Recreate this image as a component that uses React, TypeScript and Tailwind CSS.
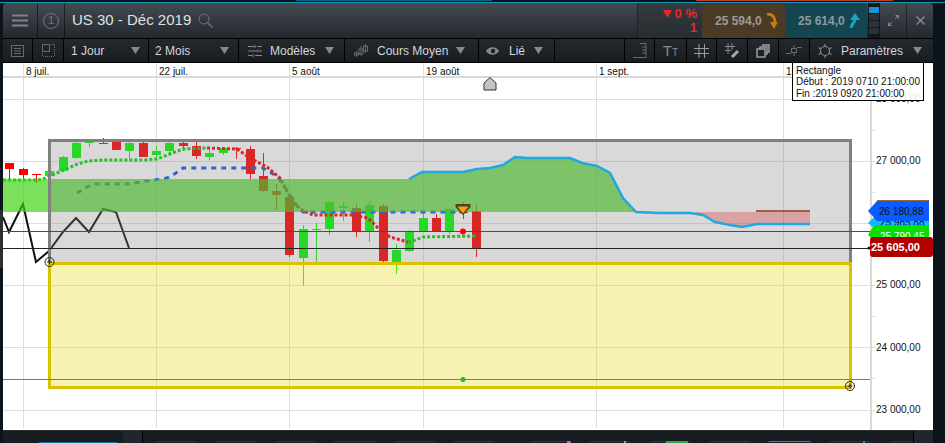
import React from "react";

type C = [number, number, number, number, number, "g" | "r"];
// x, bodyTop, bodyBottom, wickTop, wickBottom, colour
const candles: C[] = [
  [9, 163, 169, 163, 179, "r"],
  [23, 169, 175, 168, 179, "r"],
  [36, 174, 175, 174, 183, "r"],
  [49, 171, 176, 171, 177, "g"],
  [63, 157, 171, 156, 172, "g"],
  [76, 143, 158, 142, 159, "g"],
  [89, 142, 143, 141, 147, "g"],
  [103, 143, 144, 138, 144, "r"],
  [116, 142, 150, 141, 150, "r"],
  [129, 143, 151, 142, 159, "g"],
  [143, 143, 157, 142, 157, "r"],
  [156, 151, 155, 146, 159, "g"],
  [169, 143, 151, 142, 155, "g"],
  [183, 143, 146, 142, 151, "r"],
  [196, 146, 156, 142, 159, "r"],
  [209, 153, 157, 149, 160, "g"],
  [223, 148, 153, 147, 155, "g"],
  [236, 148, 149, 147, 159, "r"],
  [250, 149, 174, 146, 179, "r"],
  [263, 176, 191, 153, 192, "r"],
  [276, 191, 195, 184, 210, "r"],
  [289, 197, 255, 197, 257, "r"],
  [303, 229, 258, 225, 286, "g"],
  [316, 229, 230, 223, 262, "g"],
  [329, 202, 229, 201, 235, "g"],
  [343, 206, 208, 202, 221, "g"],
  [356, 208, 231, 204, 237, "r"],
  [369, 205, 231, 201, 242, "g"],
  [383, 206, 261, 204, 262, "r"],
  [396, 250, 262, 244, 274, "g"],
  [409, 232, 251, 230, 252, "g"],
  [423, 218, 231, 213, 231, "g"],
  [436, 218, 231, 214, 231, "r"],
  [449, 209, 231, 208, 234, "g"],
  [463, 212, 213, 202, 219, "r"],
  [476, 211, 248, 205, 257, "r"],
];

const vGrid = [23, 156, 289, 423, 596, 783];
const hGrid = [99, 161, 223, 285, 347, 410];
const ticks = [130, 192, 254, 316, 378];
const dates: [number, string][] = [
  [26, "8 juil."],
  [159, "22 juil."],
  [292, "5 août"],
  [426, "19 août"],
  [599, "1 sept."],
  [786, "15 sept."],
];
const prices: [number, string][] = [
  [98, "28 000,00"],
  [160, "27 000,00"],
  [284, "25 000,00"],
  [347, "24 000,00"],
  [409, "23 000,00"],
];

const cloudTop =
  "410,179 422,172 463,172 477,169 490,168 503,165 515,157 527,158 570,158 582,163 597,166 610,173 623,198 636,212";
const cloudLine =
  "409,179 422,172 463,172 477,169 490,168 503,165 515,157 527,158 570,158 582,163 597,166 610,173 623,198 636,212 660,213 690,213 703,215 715,222 730,225 742,227 757,224 810,224";

function Chart() {
  return (
    <svg viewBox="3 63 930 367" width="930" height="367" className="block">
      <rect x="3" y="63" width="930" height="367" fill="#ffffff" />
      {/* grid */}
      <g shapeRendering="crispEdges">
        {vGrid.map((x) => (
          <rect key={x} x={x} y="63" width="1" height="365" fill="#dedede" />
        ))}
        <rect x="3" y="76" width="867" height="2" fill="#d9d9d9" />
        {hGrid.map((y) => (
          <rect key={y} x="3" y={y} width="872" height="1" fill="#dedede" />
        ))}
        {ticks.map((y) => (
          <rect key={y} x="870" y={y} width="5" height="1" fill="#dedede" />
        ))}
        <rect x="870" y="63" width="2" height="367" fill="#d9d9d9" />
      </g>

      {/* candles */}
      {candles.map(([x, t, b, wt, wb, c], i) => {
        const col = c === "g" ? "#00ff00" : "#ff0000";
        return (
          <g key={i} shapeRendering="crispEdges">
            <rect x={x} y={wt} width="1" height={wb - wt} fill={col} />
            <rect x={x - 4} y={t} width="9" height={b - t} fill={col} />
          </g>
        );
      })}

      {/* indicators */}
      <polyline
        points="77,193 87,187 93,184 127,184 167,178 173,175 183,168 263,168 278,177 290,195 298,208 303,212 470,212"
        fill="none"
        stroke="#0b59f0"
        strokeWidth="3"
        strokeDasharray="5 5"
      />
      <polyline
        points="3,180 38,180 43,179 57,173 75,165 88,161 103,160 143,160 157,159 170,154 183,149 207,148"
        fill="none"
        stroke="#00d800"
        strokeWidth="3"
        strokeDasharray="3 2"
      />
      <polyline
        points="207,148 237,149 250,158 267,167 280,178 290,197 300,209 313,215 352,215 368,218 378,228 390,237 408,242"
        fill="none"
        stroke="#ff0000"
        strokeWidth="3"
        strokeDasharray="3 2"
      />
      <polyline
        points="408,242 413,241 423,237 477,236"
        fill="none"
        stroke="#00d800"
        strokeWidth="3"
        strokeDasharray="3 2"
      />
      <polyline
        points="3,217 9,232 23,204 36,262 49,251 63,232 76,218 89,232 103,209 116,212 129,248"
        fill="none"
        stroke="#111111"
        strokeWidth="2"
      />

      {/* clouds */}
      <polygon
        points={`3,179 410,179 ${cloudTop} 3,212`}
        fill="#3cd10f"
        fillOpacity="0.68"
      />
      <polygon
        points="693,212 810,212 810,224 757,224 742,227 730,225 715,222 703,215"
        fill="#ff0000"
        fillOpacity="0.3"
      />

      {/* rectangles */}
      <rect x="49.5" y="140.5" width="801" height="122" fill="#808080" fillOpacity="0.3" />
      <path d="M49.5 263V140.5H850.5V263" fill="none" stroke="#808080" strokeWidth="3" />
      <rect x="49.5" y="263.5" width="801" height="124" fill="#e6d000" fillOpacity="0.3" stroke="#d9c300" strokeWidth="3" />

      <polyline points={cloudLine} fill="none" stroke="#1fa9e0" strokeWidth="2.5" />
      <rect x="756" y="210" width="54" height="2" fill="#9b6240" shapeRendering="crispEdges" />

      {/* horizontal levels */}
      <g shapeRendering="crispEdges">
        <rect x="3" y="231" width="867" height="1" fill="#d81010" />
        <rect x="3" y="248" width="867" height="1" fill="#222222" />
        <rect x="3" y="379" width="867" height="1" fill="#22b822" />
      </g>

      {/* handles & markers */}
      <circle cx="49.5" cy="262" r="4.5" fill="none" stroke="#222222" />
      <path d="M49.5 259.5v5M47 262h5" stroke="#222222" />
      <circle cx="850" cy="386" r="4.5" fill="none" stroke="#222222" />
      <path d="M850 383.5v5M847.5 386h5" stroke="#222222" />
      <circle cx="463" cy="231.5" r="3" fill="#ff0000" />
      <circle cx="463" cy="379.5" r="2.5" fill="#14c814" />
      <polygon points="455.500,204 470.500,204 470.500,207 463,215 455.500,207" fill="#45451f" />
      <polygon points="457.500,206.500 468.500,206.500 463,213.500" fill="#ffa010" />
      <polygon points="484,83 490,77.5 496,83 496,90 484,90" fill="#c4c4c4" stroke="#333333" />

      {/* axis labels */}
      <g fontSize="10" fill="#111111">
        {dates.map(([x, t]) => (
          <text key={t} x={x} y="74.5">
            {t}
          </text>
        ))}
        {prices.map(([y, t]) => (
          <text key={t} x="876" y={y + 3.5}>
            {t}
          </text>
        ))}
      </g>

      {/* price tags */}
      <polygon points="868,223 874,217 929,217 929,228 874,228" fill="#12b8ff" />
      <text x="880" y="226" fontSize="10" fill="#111111">25 985,88</text>
      <polygon points="868,235 874,225 929,225 929,240 874,240" fill="#09e000" />
      <text x="880" y="240" fontSize="10" fill="#ffffff">25 790,45</text>
      <polygon points="868,211 877,201 929,201 929,221 877,221" fill="#0a5cff" />
      <rect x="877" y="200" width="52" height="1" fill="#9b6240" />
      <text x="879" y="215" fontSize="10" fill="#111111">26 180,88</text>
      <rect x="870" y="237" width="63" height="20" rx="3" fill="#b00000" />
      <circle cx="869" cy="248" r="1.5" fill="#111111" />
      <text x="871" y="251" fontSize="11" fontWeight="700" fill="#ffffff">25 605,00</text>
    </svg>
  );
}

const Caret = () => (
  <svg width="9" height="7" viewBox="0 0 9 7" className="shrink-0">
    <polygon points="0,0 9,0 4.5,7" fill="#85898d" />
  </svg>
);

function Tool({ w, children }: { w: string; children?: React.ReactNode }) {
  return (
    <div className={`flex h-full items-center justify-center border-r border-black ${w}`}>
      {children}
    </div>
  );
}

function Drop({
  w,
  icon,
  label,
  gap,
}: {
  w: string;
  icon?: React.ReactNode;
  label: string;
  gap: string;
}) {
  return (
    <div className={`flex h-full items-center border-r border-black pl-[9px] ${w}`}>
      {icon}
      <span className={`text-xs text-[#d4d6d8] ${gap}`}>{label}</span>
      <Caret />
    </div>
  );
}

const ic = { fill: "none", stroke: "#85898d", strokeWidth: 1 };
const dim = { fill: "none", stroke: "#666b6f", strokeWidth: 1 };

const Tab = ({ w, tip }: { w: string; tip?: React.ReactNode }) => (
  <div className={`relative h-[2px] shrink-0 rounded-t-[4px] border-t border-[#33383d] ${w}`}>
    {tip}
  </div>
);

export default function App() {
  return (
    <div className="relative flex h-[443px] w-[945px] flex-col overflow-hidden bg-[#0c141b] font-['Liberation_Sans',Arial,sans-serif]">
      {/* top strip */}
      <div className="flex h-[3px] shrink-0 flex-col">
        <div className="flex h-[2px]">
          <div className="w-[296px]" />
          <div className="h-px w-[196px] bg-[#12607c]" />
          <div className="w-[204px]" />
          <div className="h-px w-[197px] bg-[#c0392b]" />
        </div>
        <div className="h-px bg-[#1597b8]" />
      </div>

      <div className="ml-[3px] flex w-[930px] flex-col">
        {/* header */}
        <div className="flex h-[35px] items-stretch overflow-hidden rounded-t-[4px] bg-gradient-to-b from-[#464b51] to-[#23282e]">
          <div className="flex w-[35px] items-center justify-center border-r border-black/50">
            <svg width="16" height="13" viewBox="0 0 16 13">
              <path d="M0 1.5h16M0 6.5h16M0 11.5h16" stroke="#7f8387" strokeWidth="2" />
            </svg>
          </div>
          <div className="flex w-[27px] items-center justify-center border-r border-black/50">
            <div className="flex h-[16px] w-[16px] items-center justify-center rounded-full border border-[#72777b] text-[11px] text-[#72777b]">
              1
            </div>
          </div>
          <div className="ml-[7px] flex w-[565px] items-center">
            <span className="text-[15px] text-[#dfe1e3]">US 30 - Déc 2019</span>
            <svg width="15" height="15" viewBox="0 0 15 15" className="ml-[7px]">
              <circle cx="6" cy="6" r="5" fill="none" stroke="#6f7478" />
              <path d="M9.5 9.5L14.5 14.5" stroke="#6f7478" strokeWidth="1.3" />
            </svg>
          </div>
          <div className="flex w-[65px] flex-col items-end justify-center border-l border-black/30 bg-[#2b3036]/60 pr-[5px] text-[13px] font-bold leading-[14px] text-[#e82626]">
            <div className="flex items-center gap-[3px]">
              <svg width="9" height="8" viewBox="0 0 9 8">
                <polygon points="0,0 9,0 4.5,8" fill="#e82626" />
              </svg>
              <span>0 %</span>
            </div>
            <span>1</span>
          </div>
          <div className="flex w-[83px] items-center gap-[4px] bg-[#4b3a26] pl-[13px] text-xs font-bold text-[#9d9a94]">
            <span>25 594,0</span>
            <svg width="12" height="16" viewBox="0 0 12 16">
              <path d="M1 1C7 1 9 4 9 10" fill="none" stroke="#c47a12" strokeWidth="3" />
              <polygon points="4,9 12,9 8,16" fill="#c47a12" />
            </svg>
          </div>
          <div className="flex w-[82px] items-center gap-[4px] bg-[#15454f] pl-[13px] text-xs font-bold text-[#8b9ba0]">
            <span>25 614,0</span>
            <svg width="12" height="16" viewBox="0 0 12 16">
              <path d="M2 15C2 11 6 10 6 6" fill="none" stroke="#12a6c8" strokeWidth="3" />
              <polygon points="1,7 11,7 6,0" fill="#12a6c8" />
            </svg>
          </div>
          <div className="ml-[1px] flex w-[12px] flex-col justify-center gap-[1px] bg-[#14181c] px-px">
            <div className="h-[6px] bg-[#1b8fd8]" />
            <div className="h-[6px] bg-[#2c3238]" />
            <div className="h-[6px] bg-[#2c3238]" />
            <div className="h-[6px] bg-[#2c3238]" />
          </div>
          <div className="flex w-[27px] items-center justify-center border-r border-black/40">
            <svg width="13" height="13" viewBox="0 0 13 13">
              <path d="M8 1h4v4zM1 8v4h4z" fill="#7f8387" />
              <path d="M10 3L8 5M3 10l2-2" stroke="#7f8387" />
            </svg>
          </div>
          <div className="flex w-[26px] items-center justify-center">
            <svg width="9" height="9" viewBox="0 0 9 9">
              <path d="M.5.5l8 8M8.5.5l-8 8" stroke="#8a8e92" strokeWidth="1.3" />
            </svg>
          </div>
        </div>

        {/* toolbar */}
        <div className="flex h-[25px] items-stretch border-y border-black bg-gradient-to-b from-[#24292e] to-[#181c20]">
          <Tool w="w-[30px]">
            <svg width="13" height="12" viewBox="0 0 13 12" {...dim}>
              <rect x=".5" y=".5" width="12" height="11" />
              <path d="M3 3.5h7M3 6h7M3 8.500h7" />
            </svg>
          </Tool>
          <Tool w="w-[31px]">
            <svg width="13" height="13" viewBox="0 0 13 13" {...dim}>
              <rect x=".5" y=".5" width="7" height="7" />
              <path d="M9 .5h3.500v12H.5V9" strokeDasharray="1 1" />
            </svg>
          </Tool>
          <Drop w="w-[85px]" label="1 Jour" gap="mr-[27px] -ml-[2px]" />
          <Drop w="w-[90px]" label="2 Mois" gap="mr-[30px] -ml-[3px]" />
          <Drop
            w="w-[106px]"
            label="Modèles"
            gap="ml-[8px] mr-[10px]"
            icon={
              <svg width="14" height="12" viewBox="0 0 14 12" {...ic}>
                <path d="M0 1.500h6M9 1.500h5M0 6h9M11 6h3M0 10.500h4M7 10.500h7M7 0v3M10 4.500v3M5 9v3" />
              </svg>
            }
          />
          <Drop
            w="w-[134px]"
            label="Cours Moyen"
            gap="ml-[9px] mr-[8px]"
            icon={
              <svg width="14" height="14" viewBox="0 0 14 14" {...dim}>
                <path d="M2.500 7v6M7 2v10M11.500 0v9" />
                <rect x=".5" y="9" width="4" height="2" />
                <rect x="5" y="5" width="4" height="5" />
                <rect x="9.500" y="2" width="4" height="5" />
              </svg>
            }
          />
          <Drop
            w="w-[76px]"
            label="Lié"
            gap="ml-[10px] mr-[9px]"
            icon={
              <svg width="13" height="10" viewBox="0 0 13 10" className="-ml-[2px]">
                <path d="M0 5C3 0 10 0 13 5C10 10 3 10 0 5Z" fill="#85898d" />
                <circle cx="7" cy="5" r="2.200" fill="#1e2328" />
              </svg>
            }
          />
          <div className="w-[70px] border-r border-black" />
          <Tool w="w-[30px]">
            <svg width="14" height="15" viewBox="0 0 14 15" {...dim}>
              <path d="M7 .5h6v14H0M9 4h4M9 7h4M9 10h4" />
            </svg>
          </Tool>
          <Tool w="w-[32px]">
            <span className="text-[15px] leading-none text-[#85898d]">
              T<span className="text-[10px]">T</span>
            </span>
          </Tool>
          <Tool w="w-[30px]">
            <svg width="15" height="14" viewBox="0 0 15 14" fill="none" stroke="#9a9ea2">
              <path d="M5 0v14M10.500 0v14M0 4.500h15M0 9.500h15" />
            </svg>
          </Tool>
          <Tool w="w-[31px]">
            <svg width="15" height="15" viewBox="0 0 15 15" {...ic}>
              <path d="M3 0v11M7 0v7M0 3.500h10M0 7.500h6" />
              <path d="M7 14L13 8" stroke="#a5a9ad" strokeWidth="3" />
            </svg>
          </Tool>
          <Tool w="w-[31px]">
            <svg width="14" height="14" viewBox="0 0 14 14" fill="none" stroke="#9a9ea2" strokeWidth="1.5">
              <rect x="1" y="5" width="8" height="8" />
              <path d="M4 5V3h7v7h-2M7 3V1h6v7h-2" />
            </svg>
          </Tool>
          <Tool w="w-[31px]">
            <svg width="16" height="11" viewBox="0 0 16 11" {...dim}>
              <rect x="5.500" y="3.500" width="5" height="4" />
              <path d="M0 8.500h5M11 2.500h5M8 0v3.500M8 7.500v3.500" />
            </svg>
          </Tool>
          <div className="flex w-[123px] items-center pl-[8px]">
            <svg width="14" height="14" viewBox="0 0 14 14" fill="none" stroke="#85898d" strokeWidth="1.2">
              <circle cx="7" cy="7" r="4.500" />
              <path d="M7 0v2.500M7 11.500V14M.5 3.500l2.500 1.500M13.500 3.500L11 5M.5 10.500L3 9M13.500 10.500L11 9" />
            </svg>
            <span className="ml-[9px] mr-[10px] text-xs text-[#d4d6d8]">Paramètres</span>
            <Caret />
          </div>
        </div>

        {/* chart */}
        <div className="relative h-[367px]">
          <Chart />
          <div className="absolute left-[789px] top-0 flex h-[38px] w-[132px] flex-col justify-end border border-t-0 border-black bg-white/90 pb-px pl-[3px] text-[10px] leading-[11.500px] text-[#111111]">
            <span>Rectangle</span>
            <span>Début : 2019 0710 21:00:00</span>
            <span>Fin :2019 0920 21:00:00</span>
          </div>
        </div>
      </div>

      {/* bottom bar */}
      <div className="ml-[3px] flex h-[13px] w-[930px] border-t border-[#2b3035] bg-[#171c21]">
        <div className="flex w-[120px] items-end pl-[36px]">
          <div className="h-px w-[78px] bg-[#0f6f9a]" />
        </div>
        <div className="w-[20px] border-r border-black bg-[#20262d]" />
        <div className="flex flex-1 items-end gap-[35px] overflow-hidden pl-[12px]">
          <div className="flex gap-[18px]">
            <Tab w="w-[42px]" />
            <Tab w="w-[42px]" />
            <Tab w="w-[41px]" />
            <Tab w="w-[42px]" />
            <Tab w="w-[42px]" />
            <Tab w="w-[41px]" />
          </div>
          <div className="flex gap-[19px]">
            <Tab
              w="w-[41px]"
              tip={
                <div className="absolute -top-px right-0 flex">
                  <div className="h-[2px] w-[3px] bg-[#8d8d8d]" />
                  <div className="h-[2px] w-px bg-[#d81ad8]" />
                </div>
              }
            />
            <Tab
              w="w-[41px]"
              tip={<div className="absolute -top-px right-[5px] h-[2px] w-[2px] bg-[#9a9a9a]" />}
            />
            <Tab
              w="w-[41px]"
              tip={
                <div className="absolute -top-px left-[16px] h-[2px] w-[22px] bg-[#2aa84a]" />
              }
            />
            <Tab w="w-[41px]" />
            <div className="relative -ml-[2px] h-[2px] w-[43px] shrink-0 rounded-t-[4px] border-t border-[#1597b8]" />
            <Tab
              w="w-[41px]"
              tip={<div className="absolute -top-px right-[6px] h-[2px] w-[2px] bg-[#1597b8]" />}
            />
            <Tab w="w-[41px]" />
          </div>
        </div>
        <div className="w-[20px] border-l border-black bg-[#20262d]" />
      </div>

      {/* left edge lighter section */}
      <div className="absolute left-0 top-[210px] h-[58px] w-[3px] bg-[#2a2f33]" />
    </div>
  );
}
